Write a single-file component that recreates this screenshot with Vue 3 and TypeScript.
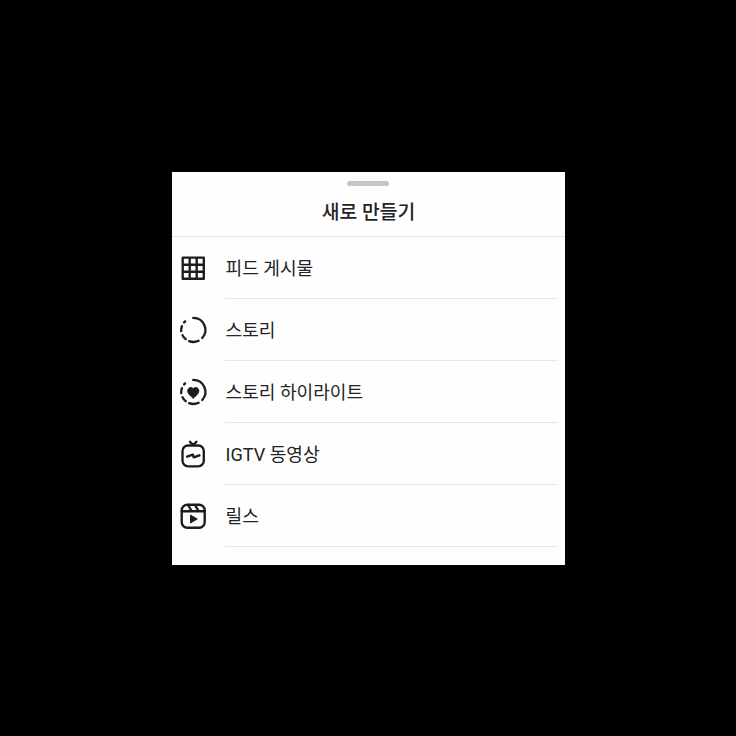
<script setup lang="ts">
type IconName = 'grid' | 'story' | 'highlight' | 'igtv' | 'reels'

interface MenuItem {
  icon: IconName
  label: string
}

const items: MenuItem[] = [
  { icon: 'grid', label: '피드 게시물' },
  { icon: 'story', label: '스토리' },
  { icon: 'highlight', label: '스토리 하이라이트' },
  { icon: 'igtv', label: 'IGTV 동영상' },
  { icon: 'reels', label: '릴스' },
]
</script>

<template>
  <main class="screen">
    <section class="sheet">
      <header class="header">
        <span class="handle"></span>
        <h1 class="title">새로 만들기</h1>
      </header>
      <ul class="menu">
        <li v-for="item in items" :key="item.icon" class="row">
          <svg class="icon" viewBox="0 0 42 42" aria-hidden="true">
            <g v-if="item.icon === 'grid'">
              <path d="M10.7 10.6h21.1v21.1H10.7zM17.7 10.6v21.1M24.7 10.6v21.1M10.7 17.7h21.1M10.7 24.7h21.1" />
            </g>
            <g v-else-if="item.icon === 'story' || item.icon === 'highlight'">
              <path d="M21.3 8.9A12 12 0 0 1 30.2 29" />
              <path d="M26.6 31.7A12 12 0 0 1 17.1 32.2" />
              <path d="M13.7 30.2A12 12 0 0 1 10.5 26.3" />
              <path d="M9.2 22.1A12 12 0 0 1 9.9 17.2" />
              <path d="M12.1 13.4L13.1 12.4" />
              <path
                v-if="item.icon === 'highlight'"
                class="solid"
                d="M21.2 27C18.4 24.8 15.7 22.7 15.7 19.9C15.7 16.4 19.7 15.5 21.2 18C22.7 15.5 26.8 16.4 26.8 19.9C26.8 22.7 24 24.8 21.2 27Z"
              />
            </g>
            <g v-else-if="item.icon === 'igtv'">
              <rect x="10.5" y="12.5" width="21.3" height="20.8" rx="5.5" />
              <path d="M18 8.8L21.2 12L24.4 8.8" />
              <path d="M15.1 23.7L20.8 21.7L21.7 24.3L27.4 22.3" />
            </g>
            <g v-else>
              <rect x="9.7" y="9.7" width="23" height="23" rx="5.6" />
              <path d="M9.9 16.2H32.5M16.1 10L19.7 16.2M23 9.9L26.6 16.2" />
              <path class="solid" d="M18.9 20.3L25.2 24L18.9 27.7Z" />
            </g>
          </svg>
          <span class="label">{{ item.label }}</span>
        </li>
      </ul>
    </section>
  </main>
</template>

<style>
body {
  margin: 0;
  background: #000;
}
</style>

<style scoped>
.screen {
  display: grid;
  place-items: center;
  width: 736px;
  height: 736px;
  background: #000;
}

.sheet {
  box-sizing: border-box;
  width: 393px;
  height: 393px;
  overflow: hidden;
  background: #fefefe;
  color: #222325;
  font-family: Roboto, 'Noto Sans CJK KR', sans-serif;
}

.header {
  box-sizing: border-box;
  display: flex;
  flex-direction: column;
  align-items: center;
  height: 65px;
  padding-top: 9px;
  border-bottom: 1px solid #e4e4e4;
}

.handle {
  width: 42px;
  height: 5px;
  border-radius: 3px;
  background: #c6c6c6;
}

.title {
  margin: 12px 0 0;
  padding-left: 1px;
  font-size: 19.3px;
  font-weight: 500;
  line-height: 30px;
}

.menu {
  margin: 0;
  padding: 0;
  list-style: none;
}

.row {
  display: flex;
  height: 62.2px;
  align-items: center;
}

.icon {
  flex: none;
  width: 42px;
  height: 42px;
  fill: none;
  stroke: #1c1c1e;
  stroke-width: 2.35;
  stroke-linecap: round;
  stroke-linejoin: round;
}

.solid {
  fill: #1c1c1e;
  stroke-width: 1;
}

.label {
  box-sizing: border-box;
  flex: 1;
  height: 62.2px;
  margin: 0 7px 0 11px;
  padding-left: 1px;
  border-bottom: 1px solid #e6e6e6;
  font-size: 18.1px;
  line-height: 64px;
}
</style>
